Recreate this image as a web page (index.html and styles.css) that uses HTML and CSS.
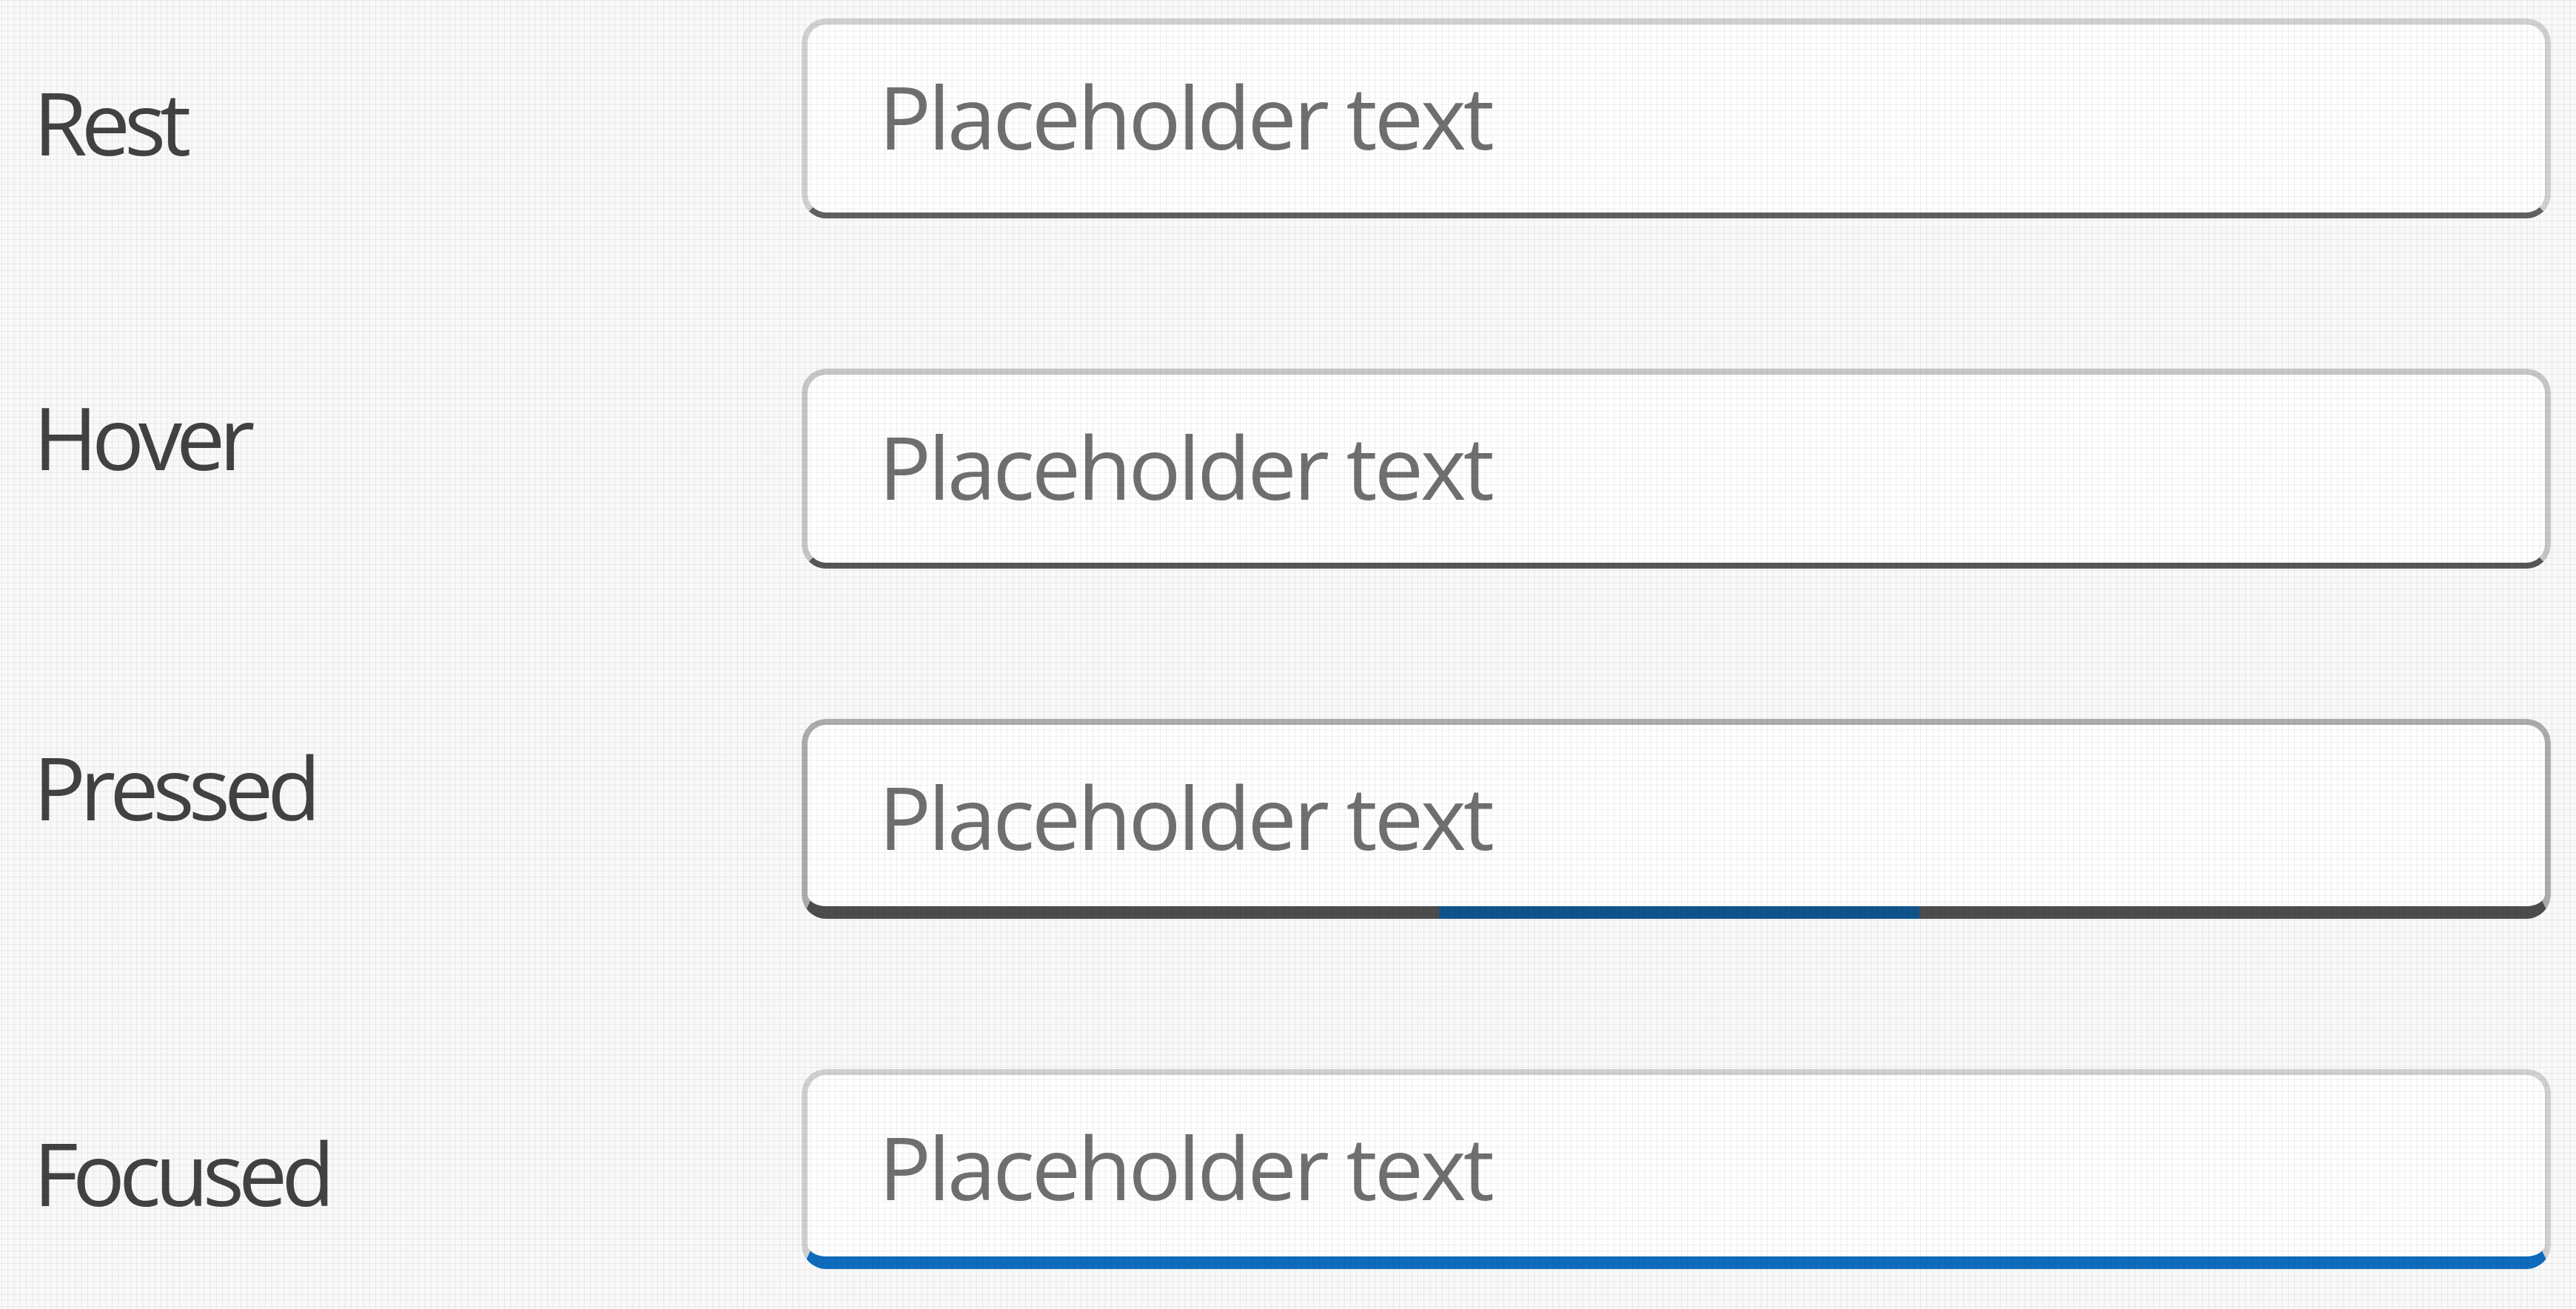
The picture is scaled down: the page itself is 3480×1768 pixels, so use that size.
FILE: index.html
```html
<!DOCTYPE html>
<html lang="en">
<head>
<meta charset="utf-8">
<title>TextBox states</title>
<link rel="stylesheet" href="styles.css">
</head>
<body>
<main class="states">
  <div class="row">
    <div class="label label--low">Rest</div>
    <div class="field field--rest"><span class="placeholder">Placeholder text</span></div>
  </div>
  <div class="row">
    <div class="label label--high">Hover</div>
    <div class="field field--hover"><span class="placeholder">Placeholder text</span></div>
  </div>
  <div class="row">
    <div class="label label--high">Pressed</div>
    <div class="field field--pressed"><span class="placeholder">Placeholder text</span></div>
  </div>
  <div class="row">
    <div class="label label--low">Focused</div>
    <div class="field field--focused"><span class="placeholder">Placeholder text</span></div>
  </div>
</main>
</body>
</html>
```

FILE: styles.css
```css
html, body {
  margin: 0;
  padding: 0;
}

body {
  width: 3480px;
  height: 1768px;
  overflow: hidden;
  background: #f9f9f9;
  font-family: "Open Sans", "Noto Sans", "Liberation Sans", sans-serif;
  position: relative;
}

body::after {
  content: "";
  position: absolute;
  inset: 0;
  pointer-events: none;
  background-image:
    linear-gradient(to right, rgba(0, 0, 0, 0.065) 0 1px, transparent 1px),
    linear-gradient(to bottom, rgba(0, 0, 0, 0.065) 0 1px, transparent 1px);
  background-size: 8.2857px 8.2857px;
  background-position: 2px 0;
}

.states {
  display: flex;
  flex-direction: column;
  gap: 203px;
  padding: 25px 0 0 45px;
}

.row {
  display: grid;
  grid-template-columns: 1038px 2363px;
  height: 270px;
}

.label {
  font-size: 118px;
  line-height: 118px;
  color: #424242;
  letter-spacing: -8px;
}

.label--low {
  padding-top: 81px;
}

.label--high {
  padding-top: 33px;
}

.field {
  position: relative;
  box-sizing: border-box;
  height: 270px;
  background: #ffffff;
  border: 8px solid #d1d1d1;
  border-bottom: 8px solid #616161;
  border-radius: 33px;
  padding: 65px 0 0 96px;
}

.field--hover {
  border-color: #c7c7c7;
  border-bottom-color: #575757;
}

.field--pressed {
  border-color: #adadad;
  border-bottom: 17px solid #4d4d4d;
}

.field--pressed::after {
  content: "";
  position: absolute;
  left: 853px;
  width: 649px;
  bottom: -17px;
  height: 17px;
  background: #0f548c;
}

.field--focused {
  border-bottom: 17px solid #0f6cbd;
}

.placeholder {
  display: block;
  font-size: 118px;
  line-height: 118px;
  color: #707070;
  letter-spacing: -4px;
  white-space: nowrap;
}
```
